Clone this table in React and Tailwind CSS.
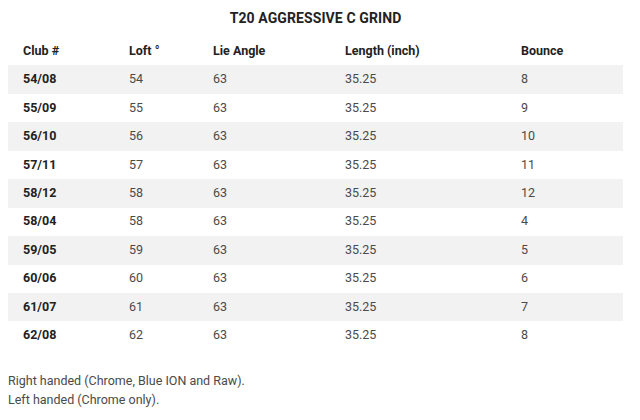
import React from "react";

const rows = [
  ["54/08", "54", "63", "35.25", "8"],
  ["55/09", "55", "63", "35.25", "9"],
  ["56/10", "56", "63", "35.25", "10"],
  ["57/11", "57", "63", "35.25", "11"],
  ["58/12", "58", "63", "35.25", "12"],
  ["58/04", "58", "63", "35.25", "4"],
  ["59/05", "59", "63", "35.25", "5"],
  ["60/06", "60", "63", "35.25", "6"],
  ["61/07", "61", "63", "35.25", "7"],
  ["62/08", "62", "63", "35.25", "8"],
];

const cols = "grid grid-cols-[106px_84px_132px_176px_1fr] pl-[15px] items-center h-[28.44px]";

export default function App() {
  return (
    <div className="w-[640px] h-[420px] bg-white px-2 pt-0 text-[12.5px] text-[#4a4a4a]" style={{ fontFamily: "Roboto, 'Liberation Sans', sans-serif" }}>
      <div className="w-[615px]">
        <div className="h-[37px] flex items-center justify-center font-bold text-[14px] text-[#222] tracking-[0.1px]">
          T20 AGGRESSIVE C GRIND
        </div>
        <div className={cols + " font-bold text-[#222]"}>
          <div>Club #</div>
          <div>Loft °</div>
          <div>Lie Angle</div>
          <div>Length (inch)</div>
          <div>Bounce</div>
        </div>
        {rows.map((r, i) => (
          <div key={i} className={cols + (i % 2 === 0 ? " bg-[#f2f2f2]" : "")}>
            <div className="font-bold text-[#222]">{r[0]}</div>
            <div>{r[1]}</div>
            <div>{r[2]}</div>
            <div>{r[3]}</div>
            <div>{r[4]}</div>
          </div>
        ))}
      </div>
      <div className="mt-[21px] leading-[19px]">
        <div>Right handed (Chrome, Blue ION and Raw).</div>
        <div>Left handed (Chrome only).</div>
      </div>
    </div>
  );
}
